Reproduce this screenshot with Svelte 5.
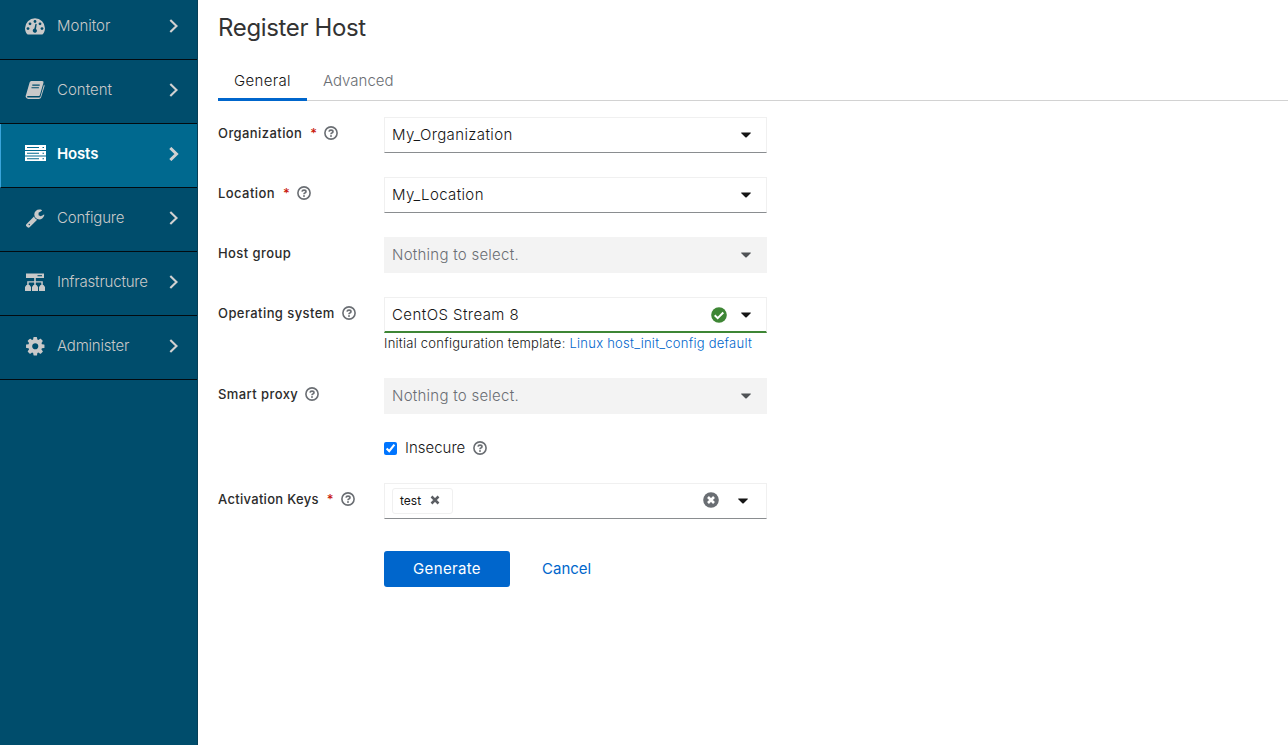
<script>
  const nav = [
    { id: 'monitor', label: 'Monitor' },
    { id: 'content', label: 'Content' },
    { id: 'hosts', label: 'Hosts', active: true },
    { id: 'configure', label: 'Configure' },
    { id: 'infrastructure', label: 'Infrastructure' },
    { id: 'administer', label: 'Administer' }
  ];
  let insecure = $state(true);
</script>

{#snippet help()}
  <svg class="help" viewBox="0 0 14 14" width="14" height="14">
    <circle cx="7" cy="7" r="6.1" fill="none" stroke="currentColor" stroke-width="1.6" />
    <path d="M5 5.7Q5.2 4.1 7 4.1Q9 4.1 9 5.7Q9 6.6 7.8 7.1Q7 7.4 7 8.3" fill="none" stroke="currentColor" stroke-width="1.6" />
    <circle cx="7" cy="10" r=".95" fill="currentColor" />
  </svg>
{/snippet}

{#snippet caret()}
  <svg class="caret" viewBox="0 0 10 6" width="10" height="6">
    <path d="M.5 .5H9.500Q10.200.8 9.700 1.300L5.700 5.200Q5 5.800 4.300 5.200L.3 1.300Q-.2.8 .5 .5Z" fill="currentColor" />
  </svg>
{/snippet}

{#snippet label(text, required, hint)}
  <div class="label">
    <span class="label-text" class:long={text === 'Activation Keys'}>{text}</span>
    {#if required}<span class="required">*</span>{/if}
    {#if hint}{@render help()}{/if}
  </div>
{/snippet}

<div class="page">
  <nav>
    {#each nav as item}
      <a class="item" class:active={item.active} href="#{item.id}">
        <svg class="icon" viewBox="0 0 22 20" width="22" height="20" fill="currentColor">
          {#if item.id === 'monitor'}
            <path fill-rule="evenodd" d="M3 18C1.700 16.500 1 14.500 1 12.300A10 10 0 0 1 21 12.300C21 14.500 20.300 16.500 19 18Q18.700 18.400 18.200 18.400H3.800Q3.300 18.400 3 18Z" />
            <g class="cut">
              <circle cx="4" cy="12.600" r="1.400" /><circle cx="6" cy="7.800" r="1.400" /><circle cx="11" cy="5.500" r="1.400" />
              <circle cx="16" cy="7.800" r="1.400" /><circle cx="18" cy="12.600" r="1.400" />
              <path d="M11.500 7.700L12.700 8L12 12.900A2.100 2.100 0 1 1 10.400 12.600Z" />
            </g>
          {:else if item.id === 'content'}
            <path d="M7.300 1H18.200Q20 1 19.500 2.800L15.900 14.900Q15.500 16.100 14.200 16.100H3.900Q2.800 16.200 3.100 17Q3.300 17.500 4.500 17.500H15.200Q16.200 17.500 16.500 16.600L20 4.600Q20.800 5.200 20.500 6.200L17.100 17.200Q16.600 18.900 14.800 18.900H4.200Q2.300 18.900 1.700 17.100Q1.400 16.100 2 15L5.600 2.600Q6 1 7.300 1Z" />
            <path class="cut-line" d="M8.300 5.100H15.700M7.500 7.700H14.900" />
          {:else if item.id === 'hosts'}
            <path d="M1 1H22V6H1ZM1 7H22V11.500H1ZM1 12.500H22V17H1Z" />
            <path class="cut-line" d="M3 3.500H15M3 9.300H15M3 14.700H15M18.500 3.500H20M18.500 9.300H20M18.500 14.700H20" />
          {:else if item.id === 'configure'}
            <svg x="1" y="0" width="20" height="20" viewBox="0 0 1792 1792">
              <path d="M448 1472q0-26-19-45t-45-19-45 19-19 45 19 45 45 19 45-19 19-45zm644-420l-682 682q-37 37-90 37-52 0-91-37l-106-108q-38-36-38-90 0-53 38-91l681-681q39 98 114.500 173.500t173.500 114.500zm634-435q0 39-23 106-47 134-164.500 217.500t-258.500 83.500q-185 0-316.500-131.500t-131.500-316.500 131.500-316.500 316.500-131.500q58 0 121.500 16.500t107.500 46.500q16 11 16 28t-16 28l-293 169v224l193 107q5-3 79-48.500t135.500-81 70.500-35.500q15 0 23.500 10t8.500 25z" />
            </svg>
          {:else if item.id === 'infrastructure'}
            <path d="M2 1.500H20V6H2ZM10.200 6H11.800V9.200H18.800V13H17.300V10.600H11.800V13H10.200V10.600H4.700V13H3.200V9.200H10.200ZM2.500 13H5.500L7 15V19H1V15ZM9.500 13H12.500L14 15V19H8V15ZM16.500 13H19.500L21 15V19H15V15Z" />
            <path class="cut-line" d="M13.500 3.700H18" />
          {:else}
            <svg x="0.5" y="-.5" width="21.500" height="21.500" viewBox="0 0 1792 1792">
              <path d="M1152 896q0-106-75-181t-181-75-181 75-75 181 75 181 181 75 181-75 75-181zm512-109v222q0 12-8 23t-20 13l-185 28q-19 54-39 91 35 50 107 138 10 12 10 25t-9 23q-27 37-99 108t-94 71q-12 0-26-9l-138-108q-44 23-91 38-16 136-29 186-7 28-36 28h-222q-14 0-24.500-8.500t-11.500-21.500l-28-184q-49-16-90-37l-141 107q-10 9-25 9-14 0-25-11-126-114-165-168-7-10-7-23 0-12 8-23 15-21 51-66.500t54-70.500q-27-50-41-99l-183-27q-13-2-21-12.500t-8-23.500v-222q0-12 8-23t19-13l186-28q14-46 39-92-40-57-107-138-10-12-10-24 0-10 9-23 26-36 98.500-107.500t94.500-71.500q13 0 26 10l138 107q44-23 91-38 16-136 29-186 7-28 36-28h222q14 0 24.500 8.500t11.500 21.500l28 184q49 16 90 37l142-107q9-9 24-9 13 0 25 10 129 119 165 170 7 8 7 22 0 12-8 23-15 21-51 66.500t-54 70.500q26 50 41 98l183 28q13 2 21 12.500t8 23.500z" />
            </svg>
          {/if}
        </svg>
        <span class="name {item.id}">{item.label}</span>
        <svg class="chevron" viewBox="0 0 10 14" width="10" height="14">
          <path d="M1.300 1L7.500 7L1.300 13" fill="none" stroke="currentColor" stroke-width={item.active ? 3 : 2.1} />
        </svg>
      </a>
    {/each}
  </nav>

  <main>
    <h1>Register Host</h1>
    <div class="tabs">
      <button class="tab current">General</button>
      <button class="tab">Advanced</button>
    </div>

    <form>
      {@render label('Organization', true, true)}
      <div class="select"><span class="value">My_Organization</span>{@render caret()}</div>

      {@render label('Location', true, true)}
      <div class="select"><span class="value">My_Location</span>{@render caret()}</div>

      {@render label('Host group', false, false)}
      <div class="select disabled"><span class="value">Nothing to select.</span>{@render caret()}</div>

      {@render label('Operating system', false, true)}
      <div class="with-hint">
        <div class="select valid">
          <span class="value">CentOS Stream 8</span>
          <svg class="check" viewBox="0 0 16 16" width="16" height="16">
            <circle cx="8" cy="8" r="7.800" fill="#3e8635" />
            <path d="M3.700 8.300L6.700 11.200L12.300 5.500" fill="none" stroke="#fff" stroke-width="2" />
          </svg>
          {@render caret()}
        </div>
        <div class="hint"><span>Initial configuration template:</span> <a href="#template">Linux host_init_config default</a></div>
      </div>

      {@render label('Smart proxy', false, true)}
      <div class="select disabled"><span class="value">Nothing to select.</span>{@render caret()}</div>

      <label class="check-row">
        <input type="checkbox" bind:checked={insecure} />
        <span>Insecure</span>
        {@render help()}
      </label>

      {@render label('Activation Keys', true, true)}
      <div class="select keys">
        <span class="chip">
          <span>test</span>
          <svg viewBox="0 0 10 10" width="10" height="10"><path d="M1.500 1.500L8.500 8.500M8.500 1.500L1.500 8.500" stroke="#5b5e63" stroke-width="2.500" /></svg>
        </span>
        <svg class="clear" viewBox="0 0 16 16" width="16" height="16">
          <circle cx="8" cy="8" r="7.800" fill="#6a6e73" />
          <path d="M5 5L11 11M11 5L5 11" stroke="#fff" stroke-width="2.600" />
        </svg>
        {@render caret()}
      </div>

      <div class="actions">
        <button type="button" class="primary">Generate</button>
        <button type="button" class="link">Cancel</button>
      </div>
    </form>
  </main>
</div>

<style>
  :global(body) { background: #fff; overflow: hidden; }
  .page {
    display: flex;
    height: 745px;
    font-family: Inter, "Open Sans", sans-serif;
    font-size: 15px;
    color: #151515;
  }
  nav { width: 198px; flex: none; background: #004d6c; border-right: 1px solid #063f57; box-sizing: border-box; }
  .item {
    --bg: #004d6c;
    box-sizing: border-box;
    height: 64px;
    display: flex;
    align-items: center;
    padding: 0 18px 4px 24px;
    border-bottom: 1px solid #020b10;
    background: var(--bg);
    color: #c9c9c9;
    text-decoration: none;
    font-size: 15px;
  }
  .item:first-child { height: 60px; padding-bottom: 8px; }
  .item.active { --bg: #00698f; border-left: 1px solid #39a5dc; padding-left: 23px; }
  .active .icon, .active .name { color: #fff; font-weight: 600; }
  .active .name { letter-spacing: -.15px; }
  .icon { flex: none; margin-right: 11px; }
  .cut { fill: var(--bg); }
  .cut-line { stroke: var(--bg); stroke-width: 1.1; fill: none; }
  .name { flex: 1; line-height: 20px; font-weight: 300; white-space: nowrap; }
  .infrastructure, .administer { letter-spacing: -.2px; }
  .configure { letter-spacing: -.2px; }
  .chevron { flex: none; color: #d1d1d1; }

  main { flex: 1; padding-left: 20px; }
  h1 { margin: 0; padding-top: 12px; font-size: 24px; line-height: 32px; font-weight: 400; letter-spacing: -.35px; color: #333; }
  .tabs { display: flex; height: 40px; margin-top: 16px; border-bottom: 1px solid #d2d2d2; }
  button { font: inherit; border: 0; background: none; padding: 0; }
  .tab { height: 41px; padding: 2px 16px 0; font-weight: 300; color: #6a6e73; border-bottom: 3px solid transparent; box-sizing: border-box; }
  .tab.current { color: #151515; border-color: #06c; width: 89px; letter-spacing: .35px; }

  form { display: grid; grid-template-columns: 166px 383px; row-gap: 24px; padding-top: 16px; }
  .label { display: flex; align-items: center; height: 32px; font-size: 13px; font-weight: 500; white-space: nowrap; color: #2b2b2b; }
  .label-text { letter-spacing: .42px; }
  .label-text.long { letter-spacing: .3px; }
  .required { color: #c9190b; margin-left: 8px; }
  .help { color: #6a6e73; margin-left: 7px; flex: none; }
  .check-row .help { margin-left: 8px; }
  .select {
    box-sizing: border-box;
    height: 36px;
    display: flex;
    align-items: center;
    padding: 0 15px 0 7px;
    border: 1px solid #f0f0f0;
    border-bottom-color: #8a8d90;
  }
  .value { flex: 1; font-weight: 300; letter-spacing: .37px; padding-bottom: 2px; }
  .disabled { background: #f3f3f3; border-color: #f3f3f3; color: #4f5255; }
  .disabled .value { color: #6a6e73; letter-spacing: .25px; }
  .valid { border-bottom: 2px solid #3e8635; }
  .valid .value { letter-spacing: .43px; padding-bottom: 0; }
  .check { margin-right: 14px; }
  .hint { height: 21px; line-height: 21px; font-size: 13px; font-weight: 300; letter-spacing: .25px; white-space: nowrap; }
  a { color: #06c; text-decoration: none; }
  .check-row { grid-column: 2; display: flex; align-items: center; height: 21px; font-weight: 300; position: relative; top: -1px; }
  input { width: 13px; height: 13px; margin: 1px 8px 0 0; }
  .keys { padding-right: 18px; }
  .chip { display: flex; align-items: center; justify-content: space-between; box-sizing: border-box; width: 61px; height: 26px; padding: 0 12px 2px 7px; border: 1px solid #f0f0f0; border-radius: 3px; font-size: 12px; }
  .clear { margin: 0 19px 2px auto; }
  .actions { grid-column: 2; display: flex; margin-top: 8px; gap: 32px; }
  .actions button { padding-bottom: 2px; }
  .primary { width: 126px; height: 36px; border-radius: 3px; background: #06c; color: #fff; letter-spacing: .35px; }
  .link { color: #06c; }
</style>
